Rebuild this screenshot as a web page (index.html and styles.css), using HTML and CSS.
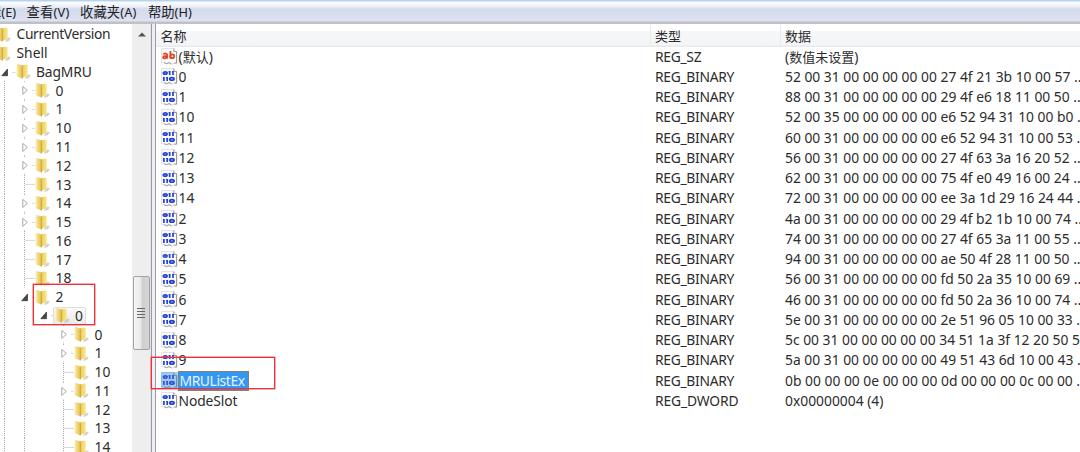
FILE: index.html
```html
<!DOCTYPE html>
<html lang="zh-CN">
<head>
<meta charset="utf-8">
<title>注册表编辑器</title>
<link rel="stylesheet" href="styles.css">
</head>
<body>
<svg class="defs" width="0" height="0" aria-hidden="true">
  <defs>
    <linearGradient id="fold" x1="0" x2="1"><stop offset="0" stop-color="#f8e9a0"/><stop offset=".5" stop-color="#edd377"/><stop offset="1" stop-color="#e3bf4b"/></linearGradient>
    <linearGradient id="back" x1="0" x2="1"><stop offset="0" stop-color="#d9ae42"/><stop offset=".35" stop-color="#f0d261"/><stop offset="1" stop-color="#f8e88c"/></linearGradient>
  </defs>
  <symbol id="folder" viewBox="0 0 15 17">
    <path d="M10 13.5l2.5-2 2.3.8-1.8 2.7-4 1z" fill="#b9bbb9" opacity=".65"/>
    <path d="M5.2 2.2l5.6-.7.9.8v10.5l-5.2 2z" fill="url(#back)"/>
    <path d="M.8 1.6l1-.6 4.5 1.3.7 1v12.5L1.2 13.6.6 12z" fill="url(#fold)"/>
    <path d="M6.3 3.5v11.7" stroke="#b98a3c" stroke-width=".9" opacity=".6"/>
    <path d="M1 2v10.5" stroke="#fff7c8" stroke-width=".7"/>
  </symbol>
  <symbol id="closed" viewBox="0 0 15.5 18.75">
    <path d="M4.5 0v2M4.5 17.5v1.2M12.5 9.4h3" stroke="#b5b5b5" stroke-dasharray="1 1"/>
    <path d="M2.8 5.4v8L7.3 9.4z" fill="#fff" stroke="#a9a9a9"/>
  </symbol>
  <symbol id="leaf" viewBox="0 0 15.5 18.75">
    <path d="M4.5 0v18.75M5.5 9.4h10" stroke="#aaa" stroke-dasharray="1 1"/>
  </symbol>
  <symbol id="open" viewBox="0 0 15.5 18.75">
    <path d="M12.5 9.4h3" stroke="#b5b5b5" stroke-dasharray="1 1"/>
    <path d="M7.5 6v6.7H1.8z" fill="#484848" stroke="#303030" stroke-width=".7"/>
  </symbol>
  <symbol id="page" viewBox="0 0 17 17">
    <path d="M.5.5h12l3.5 3v12.2l-3-.5-2 1.1-2.3-1.5-2.6 1-2.5-1.2-3.1.3z" fill="#fbfbfc" stroke="#dcdcdf" stroke-width=".8"/>
    <path d="M12.8.5v3h2.7v11.6h-2.2M3 14.8l2.5.9 2.5-1.1 2.5 1.3" fill="none" stroke="#999ba1" stroke-width="1"/>
  </symbol>
  <symbol id="bin" viewBox="0 0 17 17">
    <use href="#page"/>
    <g fill="none" stroke="#2343d8" stroke-width="1.7"><ellipse cx="4.2" cy="5" rx="1.9" ry="1.15"/><path d="M8.7 3v4M12 3v4M2.9 8.9v4M6.2 8.9v4"/><ellipse cx="10.9" cy="10.9" rx="2.2" ry="1.2"/><path d="M7.6 3.7h1M11 3.7h1M1.9 9.6h1M5.1 9.6h1" stroke-width="1"/></g>
  </symbol>
  <symbol id="str" viewBox="0 0 17 17">
    <use href="#page"/>
    <g fill="none" stroke="#dc4826" stroke-width="1.8"><path d="M2.2 6q3.6-1.3 4 .8v4M6.2 7.9q-4-.1-4 1.3 0 1.6 2 1.1l2-1.1M9.4 3v7.8"/><ellipse cx="11.3" cy="8.3" rx="1.9" ry="1.9"/></g>
  </symbol>
</svg>

<div class="window">
  <nav class="menu"><span class="m0"><b>辑</b>(E)</span><span class="m1"><b>查看</b>(V)</span><span class="m2"><b>收藏夹</b>(A)</span><span class="m3"><b>帮助</b>(H)</span></nav>
  <main class="panes">
    <section class="tree">
      <div class="node root"><i class="exp"></i><svg class="folder"><use href="#folder"/></svg><span class="name current">CurrentVersion</span></div>
      <div class="node root"><i class="exp"></i><svg class="folder"><use href="#folder"/></svg><span class="name">Shell</span></div>
      <div class="node"><svg class="exp"><use href="#open"/></svg><svg class="folder"><use href="#folder"/></svg><span class="name bag">BagMRU</span></div>
      <div class="node"><i class="guide"></i><svg class="exp"><use href="#closed"/></svg><svg class="folder"><use href="#folder"/></svg><span class="name">0</span></div>
      <div class="node"><i class="guide"></i><svg class="exp"><use href="#closed"/></svg><svg class="folder"><use href="#folder"/></svg><span class="name">1</span></div>
      <div class="node"><i class="guide"></i><svg class="exp"><use href="#closed"/></svg><svg class="folder"><use href="#folder"/></svg><span class="name">10</span></div>
      <div class="node"><i class="guide"></i><svg class="exp"><use href="#closed"/></svg><svg class="folder"><use href="#folder"/></svg><span class="name">11</span></div>
      <div class="node"><i class="guide"></i><svg class="exp"><use href="#closed"/></svg><svg class="folder"><use href="#folder"/></svg><span class="name">12</span></div>
      <div class="node"><i class="guide"></i><svg class="exp"><use href="#leaf"/></svg><svg class="folder"><use href="#folder"/></svg><span class="name">13</span></div>
      <div class="node"><i class="guide"></i><svg class="exp"><use href="#closed"/></svg><svg class="folder"><use href="#folder"/></svg><span class="name">14</span></div>
      <div class="node"><i class="guide"></i><svg class="exp"><use href="#closed"/></svg><svg class="folder"><use href="#folder"/></svg><span class="name">15</span></div>
      <div class="node"><i class="guide"></i><svg class="exp"><use href="#leaf"/></svg><svg class="folder"><use href="#folder"/></svg><span class="name">16</span></div>
      <div class="node"><i class="guide"></i><svg class="exp"><use href="#leaf"/></svg><svg class="folder"><use href="#folder"/></svg><span class="name">17</span></div>
      <div class="node"><i class="guide"></i><svg class="exp"><use href="#leaf"/></svg><svg class="folder"><use href="#folder"/></svg><span class="name">18</span></div>
      <div class="node"><i class="guide"></i><svg class="exp"><use href="#open"/></svg><svg class="folder"><use href="#folder"/></svg><span class="name">2</span></div>
      <div class="node"><i class="guide"></i><i class="guide"></i><svg class="exp"><use href="#open"/></svg><span class="picked"><svg class="folder"><use href="#folder"/></svg><span class="name">0</span></span></div>
      <div class="node"><i class="guide"></i><i class="guide"></i><i class="guide blank"></i><svg class="exp"><use href="#closed"/></svg><svg class="folder"><use href="#folder"/></svg><span class="name">0</span></div>
      <div class="node"><i class="guide"></i><i class="guide"></i><i class="guide blank"></i><svg class="exp"><use href="#closed"/></svg><svg class="folder"><use href="#folder"/></svg><span class="name">1</span></div>
      <div class="node"><i class="guide"></i><i class="guide"></i><i class="guide blank"></i><svg class="exp"><use href="#leaf"/></svg><svg class="folder"><use href="#folder"/></svg><span class="name">10</span></div>
      <div class="node"><i class="guide"></i><i class="guide"></i><i class="guide blank"></i><svg class="exp"><use href="#closed"/></svg><svg class="folder"><use href="#folder"/></svg><span class="name">11</span></div>
      <div class="node"><i class="guide"></i><i class="guide"></i><i class="guide blank"></i><svg class="exp"><use href="#leaf"/></svg><svg class="folder"><use href="#folder"/></svg><span class="name">12</span></div>
      <div class="node"><i class="guide"></i><i class="guide"></i><i class="guide blank"></i><svg class="exp"><use href="#leaf"/></svg><svg class="folder"><use href="#folder"/></svg><span class="name">13</span></div>
      <div class="node"><i class="guide"></i><i class="guide"></i><i class="guide blank"></i><svg class="exp"><use href="#leaf"/></svg><svg class="folder"><use href="#folder"/></svg><span class="name">14</span></div>
    </section>
    <div class="scrollbar">
      <svg class="up" viewBox="0 0 8 5"><path d="M0 4.5L4 .5l4 4z" fill="#555"/></svg>
      <div class="thumb"><i></i><i></i><i></i><i></i></div>
    </div>
    <div class="splitter"></div>
    <section class="values">
      <div class="head"><span class="c1">名称</span><span class="c2">类型</span><span class="c3">数据</span></div>
      <div class="row"><span class="c1"><svg class="ico"><use href="#str"/></svg><span class="label">(<b>默认</b>)</span></span><span class="c2">REG_SZ</span><span class="c3">(<b>数值未设置</b>)</span></div>
      <div class="row"><span class="c1"><svg class="ico"><use href="#bin"/></svg><span class="label">0</span></span><span class="c2">REG_BINARY</span><span class="c3">52 00 31 00 00 00 00 00 27 4f 21 3b 10 00 57 ...</span></div>
      <div class="row"><span class="c1"><svg class="ico"><use href="#bin"/></svg><span class="label">1</span></span><span class="c2">REG_BINARY</span><span class="c3">88 00 31 00 00 00 00 00 29 4f e6 18 11 00 50 ...</span></div>
      <div class="row"><span class="c1"><svg class="ico"><use href="#bin"/></svg><span class="label">10</span></span><span class="c2">REG_BINARY</span><span class="c3">52 00 35 00 00 00 00 00 e6 52 94 31 10 00 b0 ...</span></div>
      <div class="row"><span class="c1"><svg class="ico"><use href="#bin"/></svg><span class="label">11</span></span><span class="c2">REG_BINARY</span><span class="c3">60 00 31 00 00 00 00 00 e6 52 94 31 10 00 53 ...</span></div>
      <div class="row"><span class="c1"><svg class="ico"><use href="#bin"/></svg><span class="label">12</span></span><span class="c2">REG_BINARY</span><span class="c3">56 00 31 00 00 00 00 00 27 4f 63 3a 16 20 52 ...</span></div>
      <div class="row"><span class="c1"><svg class="ico"><use href="#bin"/></svg><span class="label">13</span></span><span class="c2">REG_BINARY</span><span class="c3">62 00 31 00 00 00 00 00 75 4f e0 49 16 00 24 ...</span></div>
      <div class="row"><span class="c1"><svg class="ico"><use href="#bin"/></svg><span class="label">14</span></span><span class="c2">REG_BINARY</span><span class="c3">72 00 31 00 00 00 00 00 ee 3a 1d 29 16 24 44 ...</span></div>
      <div class="row"><span class="c1"><svg class="ico"><use href="#bin"/></svg><span class="label">2</span></span><span class="c2">REG_BINARY</span><span class="c3">4a 00 31 00 00 00 00 00 29 4f b2 1b 10 00 74 ...</span></div>
      <div class="row"><span class="c1"><svg class="ico"><use href="#bin"/></svg><span class="label">3</span></span><span class="c2">REG_BINARY</span><span class="c3">74 00 31 00 00 00 00 00 27 4f 65 3a 11 00 55 ...</span></div>
      <div class="row"><span class="c1"><svg class="ico"><use href="#bin"/></svg><span class="label">4</span></span><span class="c2">REG_BINARY</span><span class="c3">94 00 31 00 00 00 00 00 ae 50 4f 28 11 00 50 ...</span></div>
      <div class="row"><span class="c1"><svg class="ico"><use href="#bin"/></svg><span class="label">5</span></span><span class="c2">REG_BINARY</span><span class="c3">56 00 31 00 00 00 00 00 fd 50 2a 35 10 00 69 ...</span></div>
      <div class="row"><span class="c1"><svg class="ico"><use href="#bin"/></svg><span class="label">6</span></span><span class="c2">REG_BINARY</span><span class="c3">46 00 31 00 00 00 00 00 fd 50 2a 36 10 00 74 ...</span></div>
      <div class="row"><span class="c1"><svg class="ico"><use href="#bin"/></svg><span class="label">7</span></span><span class="c2">REG_BINARY</span><span class="c3">5e 00 31 00 00 00 00 00 2e 51 96 05 10 00 33 ...</span></div>
      <div class="row"><span class="c1"><svg class="ico"><use href="#bin"/></svg><span class="label">8</span></span><span class="c2">REG_BINARY</span><span class="c3">5c 00 31 00 00 00 00 00 34 51 1a 3f 12 20 50 5</span></div>
      <div class="row"><span class="c1"><svg class="ico"><use href="#bin"/></svg><span class="label">9</span></span><span class="c2">REG_BINARY</span><span class="c3">5a 00 31 00 00 00 00 00 49 51 43 6d 10 00 43 ...</span></div>
      <div class="row selected"><span class="c1"><svg class="ico"><use href="#bin"/></svg><span class="label">MRUListEx</span></span><span class="c2">REG_BINARY</span><span class="c3">0b 00 00 00 0e 00 00 00 0d 00 00 00 0c 00 00 ...</span></div>
      <div class="row"><span class="c1"><svg class="ico"><use href="#bin"/></svg><span class="label slot">NodeSlot</span></span><span class="c2 dword">REG_DWORD</span><span class="c3">0x00000004 (4)</span></div>
    </section>
  </main>
  <div class="mark mark-tree"></div>
  <div class="mark mark-value"></div>
</div>
</body>
</html>
```

FILE: styles.css
```css
* { box-sizing: border-box; }
body { margin: 0; background: #fff; }
.defs { position: absolute; }
.window {
  position: relative;
  width: 1080px;
  height: 452px;
  overflow: hidden;
  display: flex;
  flex-direction: column;
  font: 13.85px/20px "Noto Sans", "Noto Sans CJK SC", sans-serif;
  color: #2c2c2c;
  white-space: nowrap;
}
b { font: 13px/1 "Noto Sans CJK SC", sans-serif; }

.menu {
  flex: none;
  height: 24px;
  display: flex;
  padding-top: 2px;
  font-size: 12.8px;
  color: #222;
  background: linear-gradient(#b5d2eb 0, #b9d5ec 1px, #fbfcfe 2px, #f3f6fb 5px, #e0e5f2 8px, #d3daed 9px, #dce1f2 20px, #dfe3f2 21px, #bfc1c8 22px, #c0c1c6 24px);
}
.menu b { font-size: 13.3px; }
.m0 { width: 38.5px; margin-left: -12px; }
.m1 { width: 53.5px; letter-spacing: .2px; }
.m2 { width: 68px; letter-spacing: .1px; }

.panes { flex: 1; min-height: 0; display: flex; }
.tree { width: 132px; padding-top: 1px; overflow: hidden; }
.node { display: flex; align-items: center; height: 18.77px; line-height: 18px; }
.root { margin-left: -19.5px; }
.guide {
  flex: none;
  width: 19.5px;
  height: 18.77px;
  background: repeating-linear-gradient(#aaa 0 1px, #fff 1px 2px) 4px 0 / 1px 100% no-repeat;
}
.blank { background: none; }
.exp { flex: none; width: 15.5px; height: 18.75px; }
.folder { flex: none; width: 15px; height: 17px; margin-right: 5.5px; }
.name { flex: none; }
.current { letter-spacing: -.35px; }
.bag { letter-spacing: -.15px; }
.picked {
  display: flex;
  align-items: center;
  height: 18px;
  margin-left: -2px;
  padding: 0 2px 0 1px;
  background: linear-gradient(#fafafa, #eaeaea);
  border: 1px solid #dedede;
  border-radius: 2px;
}

.scrollbar {
  width: 18px;
  padding: 8px 1px 0;
  display: flex;
  flex-direction: column;
  align-items: center;
  background: #eeeeef;
}
.up { flex: none; width: 8px; height: 5px; margin-left: 2px; }
.thumb {
  width: 17px;
  height: 74px;
  margin-top: 239px;
  display: flex;
  flex-direction: column;
  align-items: center;
  justify-content: center;
  gap: 2px;
  background: linear-gradient(90deg, #f6f6f6, #e9e9eb 45%, #cfcfd2 55%, #d6d6d9);
  border: 1px solid #a2a2a4;
  border-radius: 2px;
}
.thumb i { width: 8px; height: 1px; background: #666; }
.splitter {
  width: 6px;
  background: linear-gradient(90deg, #e4e4e8 0 1px, #9b9ca1 1px 2px, #eeeef4 2px 5px, #9a9ca6 5px 6px);
}

.values { flex: 1; min-width: 0; overflow: hidden; }
.head, .row { display: grid; grid-template-columns: 493.5px 130px 1fr; align-items: center; }
.head {
  height: 22.5px;
  font: 13px/20px "Noto Sans CJK SC", sans-serif;
  background: linear-gradient(#fff 0 7px, #f6f7f8 7px, #f4f5f6 21px, #e9eaec 22px);
}
.head span { height: 22.5px; line-height: 24px; padding-left: 4.5px; }
.head .c2, .head .c3 { border-left: 1px solid #e9ebee; padding-left: 4.5px; }
.row { height: 20.26px; }
.row > span { display: flex; align-items: center; height: 20.26px; padding-left: 4.5px; }
.row > .c2, .row > .c3 { padding-left: 5.5px; }
.row > .c2 { letter-spacing: -.3px; }
.row > .dword { letter-spacing: -.15px; }
.ico { width: 17px; height: 17px; flex: none; margin-right: 1px; }
.label { line-height: 20px; }
.slot { letter-spacing: -.1px; }
.selected .label {
  height: 20px;
  line-height: 18px;
  margin-left: -1px;
  padding: 0 3px 0 1px;
  letter-spacing: -.4px;
  color: #e8f3ff;
  background: #3498f2;
  border: 1px solid #8b806f;
}
.selected .ico { background: #8fc6f5; opacity: .85; }
.selected use { mix-blend-mode: multiply; }

.mark { position: absolute; border: 1.4px solid #ec3238; box-shadow: 0 0 0 .4px #ec3238; }
.mark-tree { left: 33px; top: 284px; width: 62px; height: 41px; }
.mark-value { left: 151px; top: 357px; width: 124px; height: 32px; }
```
